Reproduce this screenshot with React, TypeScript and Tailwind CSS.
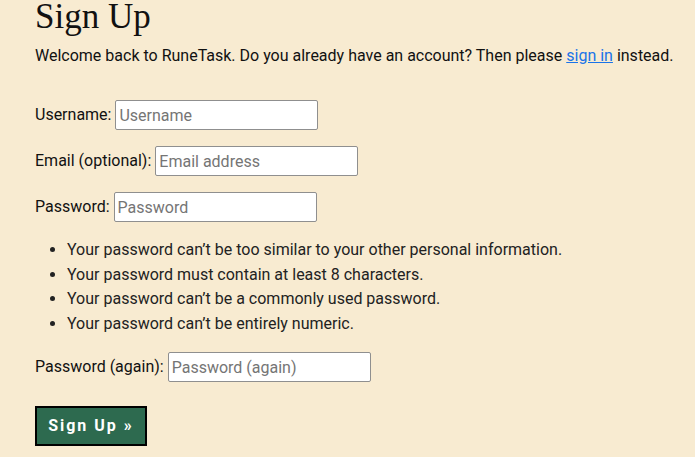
export default function App() {
  const rules = [
    "Your password can’t be too similar to your other personal information.",
    "Your password must contain at least 8 characters.",
    "Your password can’t be a commonly used password.",
    "Your password can’t be entirely numeric.",
  ];

  return (
    <div className="min-h-screen bg-[#f8ebd1] pl-[35px] pr-[12px] text-[16px] text-[#111]" style={{ fontFamily: 'Roboto, "Liberation Sans", sans-serif' }}>
      <h1 className="text-[35px] leading-[34px] text-[#111]" style={{ fontFamily: '"Liberation Serif", serif' }}>
        Sign Up
      </h1>
      <p className="mt-[10px] leading-[24px]">
        Welcome back to RuneTask. Do you already have an account? Then please{" "}
        <a href="#" className="text-[#1a73e8] underline">sign in</a> instead.
      </p>

      <form className="mt-[32px]">
        <div className="flex items-center h-[30px] mb-4">
          <label>Username:</label>
          <input className="ml-[4px] w-[203px] h-[30px] bg-white border border-[#8f8f8f] rounded-[2px] px-[3px] placeholder-[#757575] outline-none" placeholder="Username" />
        </div>
        <div className="flex items-center h-[30px] mb-4">
          <label>Email (optional):</label>
          <input className="ml-[4px] w-[203px] h-[30px] bg-white border border-[#8f8f8f] rounded-[2px] px-[3px] placeholder-[#757575] outline-none" placeholder="Email address" />
        </div>
        <div className="flex items-center h-[30px] mb-4">
          <label>Password:</label>
          <input className="ml-[4px] w-[203px] h-[30px] bg-white border border-[#8f8f8f] rounded-[2px] px-[3px] placeholder-[#757575] outline-none" placeholder="Password" />
        </div>
        <ul className="list-disc pl-8 leading-[24.5px] text-[#222] mb-4">
          {rules.map((r) => (
            <li key={r}>{r}</li>
          ))}
        </ul>
        <div className="flex items-center h-[30px]">
          <label>Password (again):</label>
          <input className="ml-[4px] w-[203px] h-[30px] bg-white border border-[#8f8f8f] rounded-[2px] px-[3px] placeholder-[#757575] outline-none" placeholder="Password (again)" />
        </div>
        <button type="button" className="mt-[24px] w-[112px] h-[40px] bg-[#2d6a4f] border-2 border-black text-white font-bold tracking-[2px] text-[16px]">
          Sign Up »
        </button>
      </form>
    </div>
  );
}
